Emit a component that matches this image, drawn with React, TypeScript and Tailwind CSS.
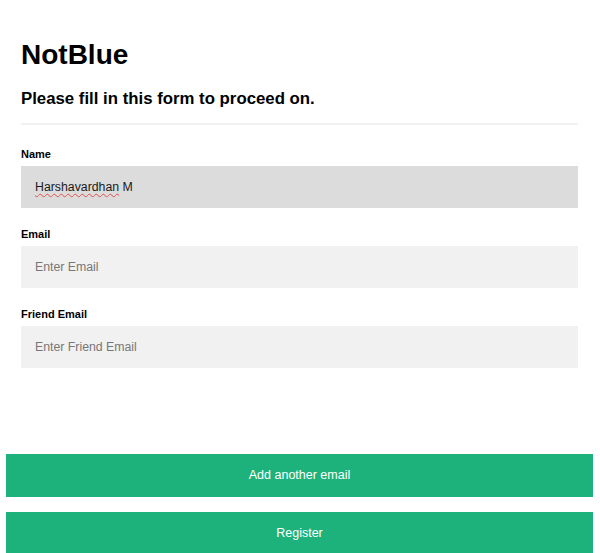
import React from "react";

export default function App() {
  return (
    <div className="bg-white min-h-[553px] font-['Liberation_Sans',Arial,sans-serif] text-black">
      <div className="pl-[21px] pr-[22px]">
        <h1 className="pt-[39px] text-[28px] leading-[32px] font-bold">NotBlue</h1>
        <h2 className="mt-[18px] text-[16.8px] leading-[20px] font-bold">
          Please fill in this form to proceed on.
        </h2>
        <div className="mt-[14px] h-[2px] bg-[#f1f1f1]" />

        <label className="block mt-[23px] text-[11px] leading-[13px] font-bold">Name</label>
        <div className="mt-[5px] h-[42px] bg-[#dcdcdc] pl-[14px] flex items-center text-[12.3px] text-[#1a1a1a]">
          <span className="underline decoration-wavy decoration-[#e05050] decoration-[1px] underline-offset-[2px]">
            Harshavardhan
          </span>
          <span>&nbsp;M</span>
        </div>

        <label className="block mt-[20px] text-[11px] leading-[13px] font-bold">Email</label>
        <input
          type="text"
          placeholder="Enter Email"
          className="block mt-[5px] w-full h-[42px] bg-[#f1f1f1] pl-[14px] text-[12.3px] outline-none placeholder:text-[#777] font-['Liberation_Sans',Arial,sans-serif]"
        />

        <label className="block mt-[20px] text-[11px] leading-[13px] font-bold">Friend Email</label>
        <input
          type="text"
          placeholder="Enter Friend Email"
          className="block mt-[5px] w-full h-[42px] bg-[#f1f1f1] pl-[14px] text-[12.3px] outline-none placeholder:text-[#777] font-['Liberation_Sans',Arial,sans-serif]"
        />
      </div>

      <div className="pl-[6px] pr-[7px] mt-[86px] flex flex-col gap-[15px]">
        <button className="h-[43px] w-full bg-[#1db27c] text-white text-[12.5px] font-['Liberation_Sans',Arial,sans-serif]">
          Add another email
        </button>
        <button className="h-[43px] w-full bg-[#1db27c] text-white text-[12.5px] font-['Liberation_Sans',Arial,sans-serif]">
          Register
        </button>
      </div>
    </div>
  );
}
